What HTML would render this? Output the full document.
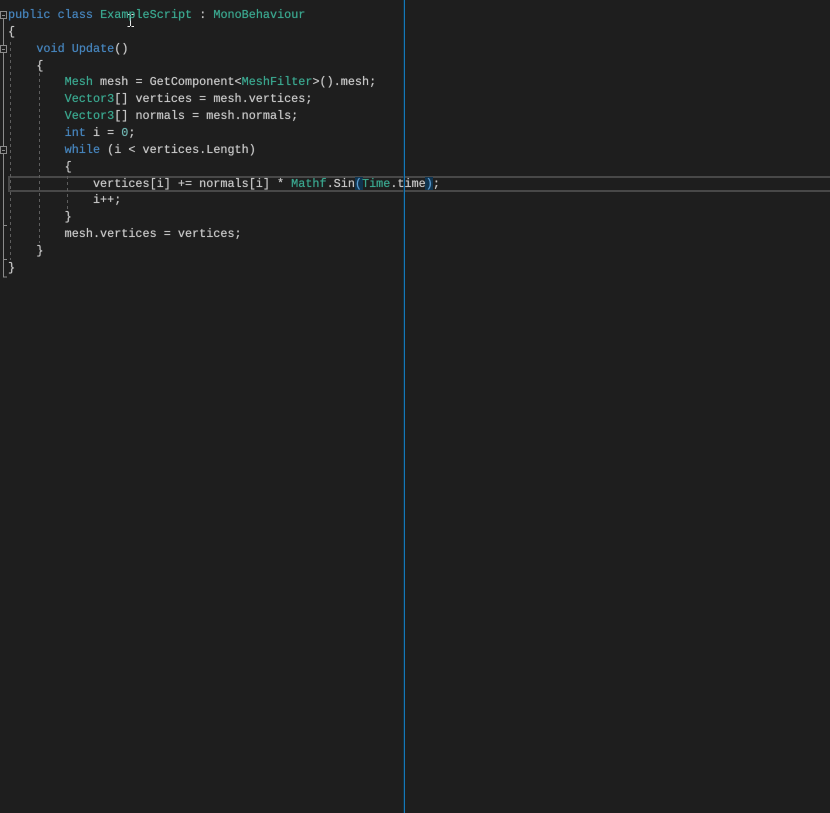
<!DOCTYPE html>
<html>
<head>
<meta charset="utf-8">
<style>
html,body{margin:0;padding:0;background:#1e1e1e;}
#w{position:relative;width:830px;height:813px;overflow:hidden;background:#1e1e1e;}
.l{position:absolute;left:8px;white-space:pre;font-family:"Liberation Mono",monospace;font-size:11.8px;line-height:17px;height:17px;color:#c6c6c6;text-shadow:0 0 .6px currentColor;}
.k{color:#4684bc}.t{color:#3aa68e}.n{color:#6fb4b0}.p{color:#5b9bd0}
svg{position:absolute;left:0;top:0}
</style>
</head>
<body>
<div id="w">
<svg width="830" height="813">
<rect x="8" y="176" width="822" height="2" fill="#484848"/>
<rect x="8" y="190" width="822" height="2" fill="#484848"/>
<rect x="8" y="176" width="2" height="16" fill="#484848"/>
<rect x="355" y="177" width="8" height="13" fill="#10344f"/>
<rect x="425" y="177" width="8" height="13" fill="#10344f"/>
<g stroke="#8a8a8a" stroke-width="1" fill="none">
<path d="M3.500 19V277H7"/>
<path d="M3.500 259.500H7"/>
<path d="M3.500 225.500H7"/>
<rect x="0.500" y="11.500" width="6" height="7" fill="#1e1e1e"/>
<path d="M2 15.500h3"/>
<rect x="0.500" y="45.500" width="6" height="7" fill="#1e1e1e"/>
<path d="M2 49.500h3"/>
<rect x="0.500" y="146.500" width="6" height="7" fill="#1e1e1e"/>
<path d="M2 150.500h3"/>
</g>
<g stroke="#5e5e5e" stroke-width="1" stroke-dasharray="3 3" fill="none">
<path d="M10.500 42V260"/>
<path d="M39.500 73V243"/>
<path d="M67.500 176V209"/>
</g>
<rect x="404" y="0" width="1" height="813" fill="#1478b8"/>
<rect x="403" y="0" width="1" height="813" fill="#12384f" opacity=".7"/>
<path d="M127.500 14.500h2.500M131.500 14.500h2.500M130.500 15v11M127.500 26.500h2.500M131.500 26.500h2.500" stroke="#e8e8e8" stroke-width="1" fill="none"/>
</svg>
<div class="l" style="top:6.500px"><span class="k">public</span> <span class="k">class</span> <span class="t">ExampleScript</span> : <span class="t">MonoBehaviour</span></div>
<div class="l" style="top:23.500px">{</div>
<div class="l" style="top:40.500px">    <span class="k">void</span> <span class="k">Update</span>()</div>
<div class="l" style="top:57.500px">    {</div>
<div class="l" style="top:74px">        <span class="t">Mesh</span> mesh = GetComponent&lt;<span class="t">MeshFilter</span>&gt;().mesh;</div>
<div class="l" style="top:91px">        <span class="t">Vector3</span>[] vertices = mesh.vertices;</div>
<div class="l" style="top:108px">        <span class="t">Vector3</span>[] normals = mesh.normals;</div>
<div class="l" style="top:125px">        <span class="k">int</span> i = <span class="n">0</span>;</div>
<div class="l" style="top:141.500px">        <span class="k">while</span> (i &lt; vertices.Length)</div>
<div class="l" style="top:158.500px">        {</div>
<div class="l" style="top:175.500px">            vertices[i] += normals[i] * <span class="t">Mathf</span>.Sin<span class="p">(</span><span class="t">Time</span>.time<span class="p">)</span>;</div>
<div class="l" style="top:192px">            i++;</div>
<div class="l" style="top:209px">        }</div>
<div class="l" style="top:225.500px">        mesh.vertices = vertices;</div>
<div class="l" style="top:242.500px">    }</div>
<div class="l" style="top:259.500px">}</div>
</div>
</body>
</html>
